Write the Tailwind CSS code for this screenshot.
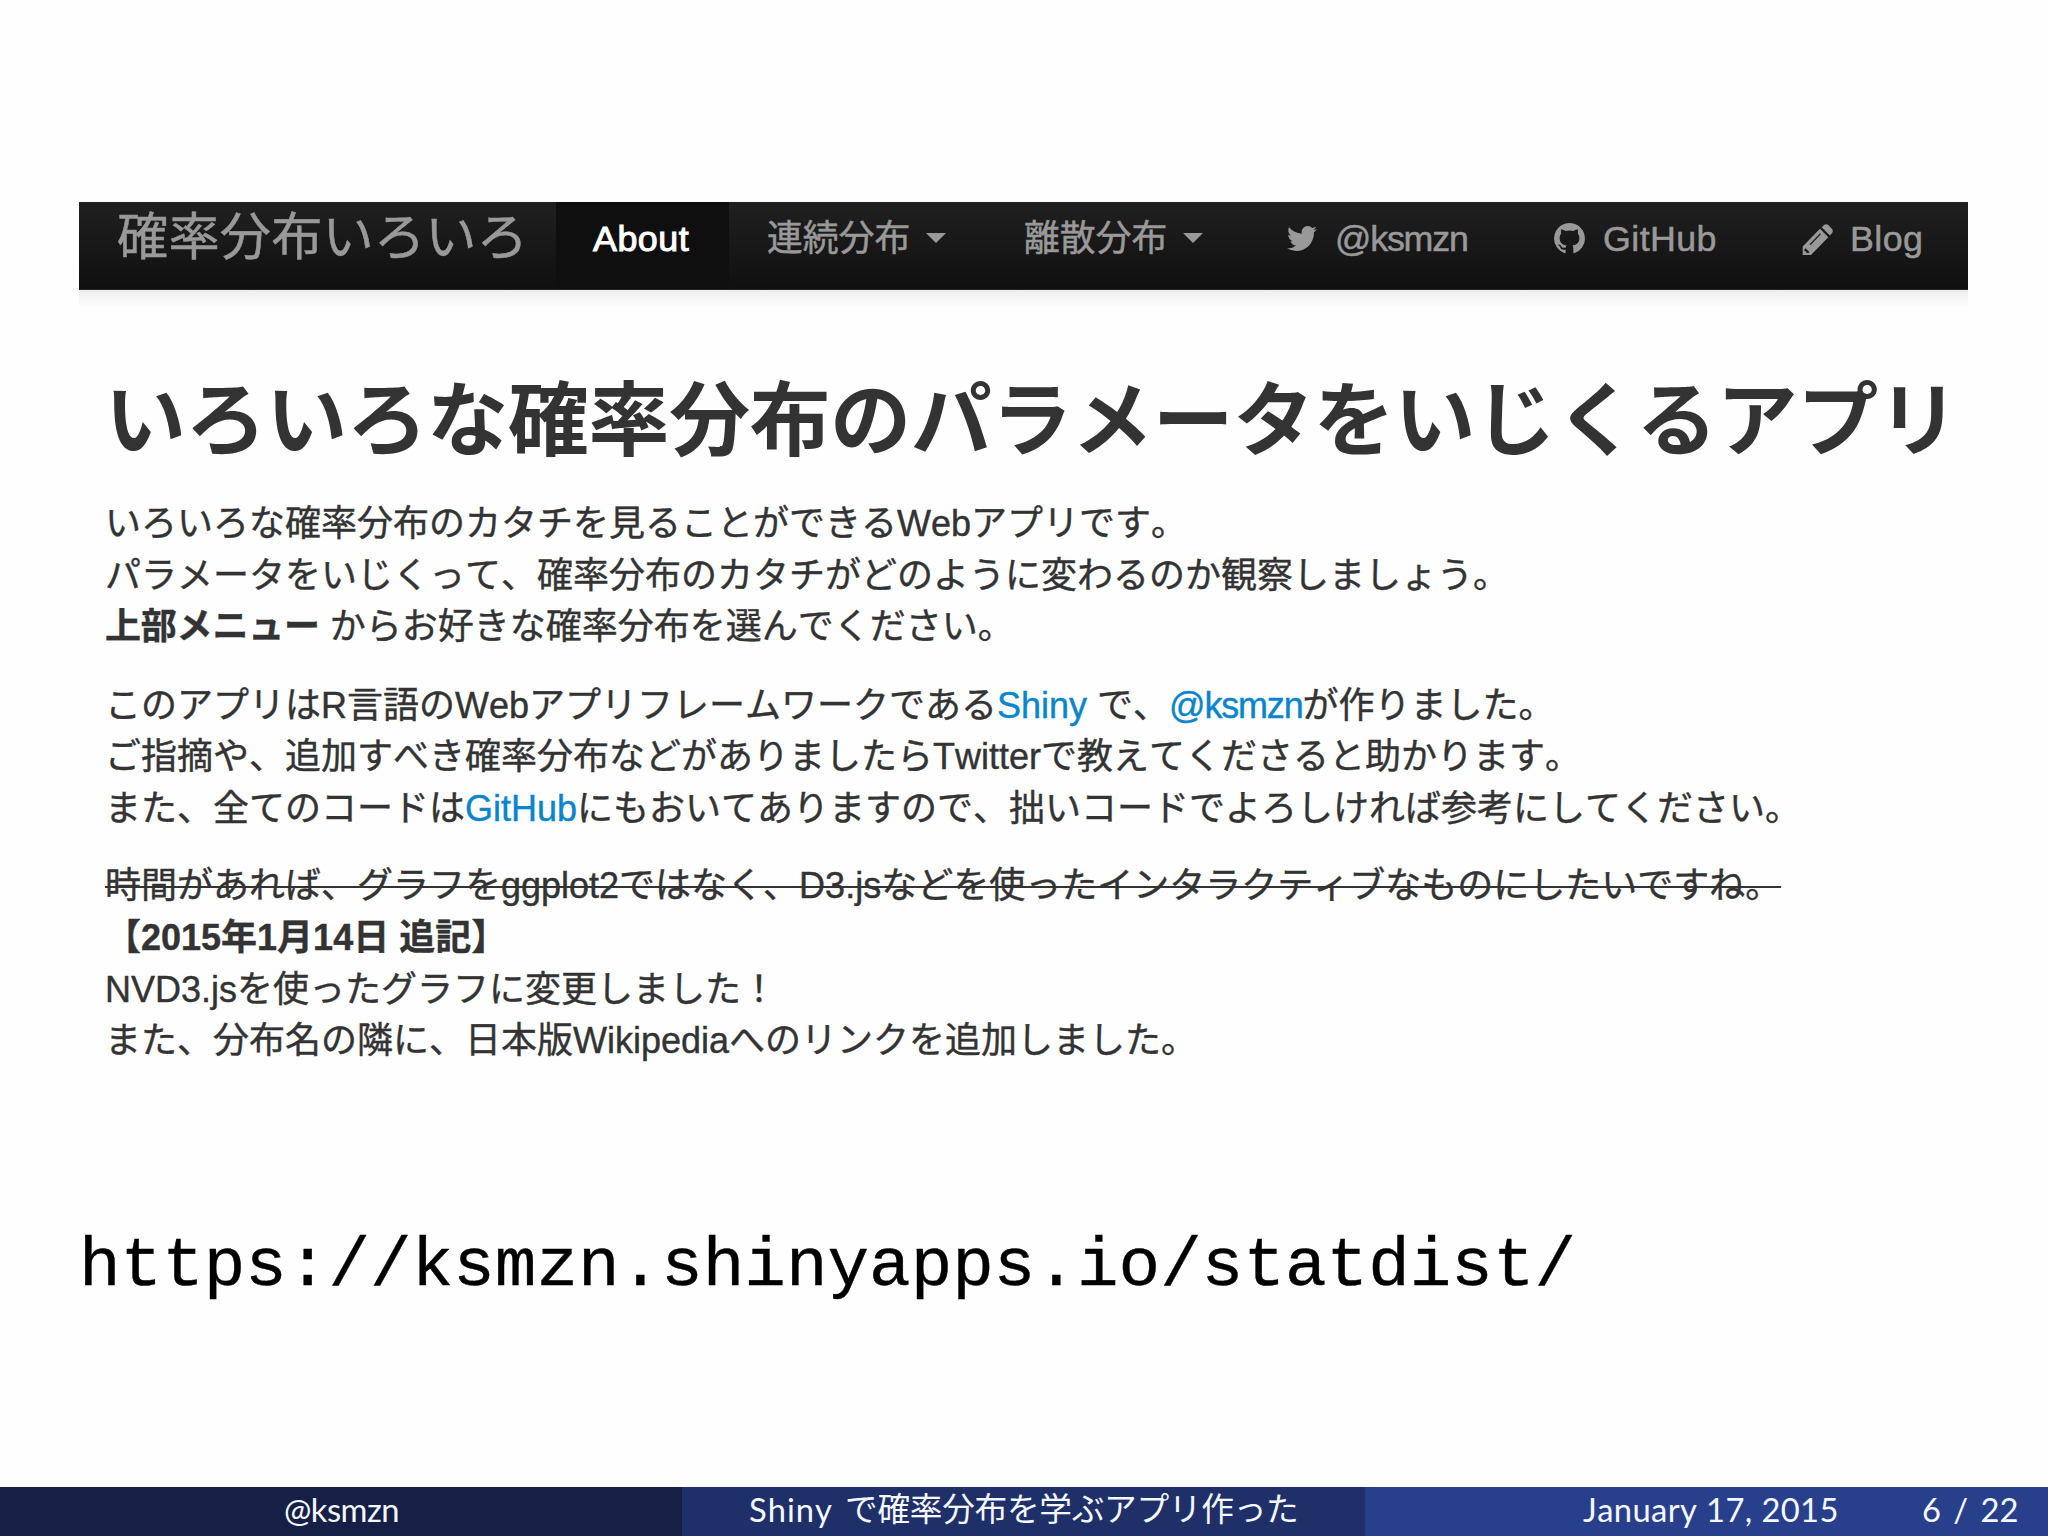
<!DOCTYPE html>
<html lang="ja">
<head>
<meta charset="utf-8">
<title>確率分布いろいろ</title>
<script src="https://cdn.jsdelivr.net/npm/@tailwindcss/browser@4"></script>
</head>
<body class="bg-[#fefefe]">
<div class="flex h-[1536px] w-[2048px] flex-col overflow-hidden font-['Liberation_Sans','Noto_Sans_CJK_JP',sans-serif] text-[35.85px] text-[#333] [font-kerning:none]">
  <nav class="mt-[202px] ml-[79px] flex h-[88px] w-[1889px] shrink-0 whitespace-nowrap border-b border-[#252525] bg-linear-to-b from-[#202020] to-[#111011] leading-[74px] text-[#999] [-webkit-text-stroke:0.5px]">
    <div class="w-[477px] pl-[38px] text-[51.2px] leading-[72px] tracking-[0.2px]">確率分布いろいろ</div>
    <div class="w-[173px] bg-[#0f0f10] pl-[37px] text-white [-webkit-text-stroke:1px_white] tracking-[0.5px]">About</div>
    <div class="flex w-[256px] pl-[38px]">連続分布<span class="mt-[31px] ml-[16px] h-0 w-0 border-x-[10px] border-t-[10px] border-x-transparent border-t-[#999]"></span></div>
    <div class="flex w-[265px] pl-[39px]">離散分布<span class="mt-[31px] ml-[16px] h-0 w-0 border-x-[10px] border-t-[10px] border-x-transparent border-t-[#999]"></span></div>
    <div class="flex w-[266px] pl-[37px] tracking-[-1.2px]">
      <svg class="mt-[24px] mr-[18px] h-[25px] w-[30px]" viewBox="108 256 1576 1280" preserveAspectRatio="none" fill="#999"><path d="M1684 408q-67 98-162 167 1 14 1 42 0 130-38 259.500t-115.500 248.500-184.500 210.500-258 146-323 54.500q-271 0-496-145 35 4 78 4 225 0 401-138-105-2-188-64.500t-114-159.500q33 5 61 5 43 0 85-11-112-23-185.500-111.500t-73.500-205.500v-4q68 38 146 41-66-44-105-115t-39-154q0-88 44-163 121 149 294.500 238.500t371.500 99.500q-8-38-8-74 0-134 94.500-228.500t228.500-94.500q140 0 236 102 109-21 205-78-37 115-142 178 93-10 186-50z"/></svg>@ksmzn</div>
    <div class="flex w-[248px] pl-[38px] tracking-[0.4px]">
      <svg class="mt-[21px] mr-[18px] h-[31px] w-[31px]" viewBox="128 128 1536 1536" fill="#999"><path d="M896 128q209 0 385.500 103t279.500 279.500 103 385.500q0 251-146.500 451.500t-378.500 277.500q-27 5-40-7t-13-30q0-3 .5-76.500t.5-134.500q0-97-52-142 57-6 102.500-18t94-39 81-66.500 53-105 20.500-150.500q0-119-79-206 37-91-8-204-28-9-81 11t-92 44l-38 24q-93-26-192-26t-192 26q-16-11-42.500-27t-83.500-38.500-85-13.500q-45 113-8 204-79 87-79 206 0 85 20.500 150t52.500 105 80.500 67 94 39 102.500 18q-39 36-49 103-21 10-45 15t-57 5-65.500-21.500-55.500-62.500q-19-32-48.500-52t-49.500-24l-20-3q-21 0-29 4.500t-5 11.500 9 14 13 12l7 5q22 10 43.500 38t31.500 51l10 23q13 38 44 61.500t67 30 69.500 7 55.500-3.500l23-4q0 38 .5 88.500t.5 54.500q0 18-13 30t-40 7q-232-77-378.500-277.500t-146.500-451.500q0-209 103-385.500t279.500-279.500 385.500-103z"/></svg>GitHub</div>
    <div class="flex pl-[38px] tracking-[0.4px]">
      <svg class="mt-[22px] mr-[17px] h-[31px] w-[31px]" viewBox="0 0 31 31"><path fill="#999" d="M.7 31V22.500L18 4.700 26.300 13.300 9 31ZM19.700 3.200L22 .9Q24 -.6 26.300 1L30 4.900Q31.600 7 30 9.200L27.900 11.600Z"/><path d="M8 20.700L18.500 9.800" stroke="#222" stroke-width="1.300"/><path fill="#161616" d="M3.500 24.200L7.600 28.300 6 29H4.300V27.300H2.500V25.300Z"/></svg>Blog</div>
  </nav>
  <div class="ml-[79px] h-[18px] w-[1889px] shrink-0 bg-linear-to-b from-[#efedf0] to-[#fefefe]"></div>

  <main class="ml-[105px] h-[892px] shrink-0 whitespace-nowrap text-[36px] leading-[51.7px] [-webkit-text-stroke:0.4px]">
    <h1 class="mt-[61px] text-[80.9px] leading-[104px] font-bold tracking-[-0.3px] [-webkit-text-stroke:0]">いろいろな確率分布のパラメータをいじくるアプリ</h1>
    <p class="mt-[25px]">いろいろな確率分布のカタチを見ることができるWebアプリです。<br>パラメータをいじくって、確率分布のカタチがどのように変わるのか観察しましょう。<br><b class="tracking-[-0.2px]">上部メニュー</b> からお好きな確率分布を選んでください。</p>
    <p class="mt-[26.500px]">このアプリはR言語のWebアプリフレームワークである<a class="text-[#0a84cb]">Shiny</a> で、<a class="text-[#0a84cb] tracking-[-1.2px]">@ksmzn</a>が作りました。<br>ご指摘や、追加すべき確率分布などがありましたらTwitterで教えてくださると助かります。<br>また、全てのコードは<a class="text-[#0a84cb]">GitHub</a>にもおいてありますので、拙いコードでよろしければ参考にしてください。</p>
    <p class="mt-[25.500px]"><s class="decoration-2">時間があれば、グラフをggplot2ではなく、D3.jsなどを使ったインタラクティブなものにしたいですね。</s><br><b>【2015年1月14日 追記】</b><br>NVD3.jsを使ったグラフに変更しました！<br>また、分布名の隣に、日本版Wikipediaへのリンクを追加しました。</p>
  </main>

  <div class="ml-[79px] h-[287px] shrink-0 whitespace-nowrap font-['Liberation_Mono',monospace] text-[69.3px] leading-[133px] text-black [-webkit-text-stroke:0.4px]">https://ksmzn.shinyapps.io/statdist/</div>

  <footer class="flex h-[49px] shrink-0 whitespace-nowrap font-['Lato','Noto_Sans_CJK_JP',sans-serif] text-[32.7px] leading-[45px] text-[#f4f8ff]">
    <div class="w-[682px] bg-[#162046] pl-[284px] tracking-[-0.5px]">@ksmzn</div>
    <div class="flex w-[683px] bg-[#1f2f68] pl-[67px]"><span class="w-[96px] tracking-[1px]">Shiny</span><span class="leading-[43px] tracking-[-0.3px]">で確率分布を学ぶアプリ作った</span></div>
    <div class="flex w-[683px] bg-[#283f8c] pl-[218px]"><span class="w-[339px] tracking-[0.4px]">January 17, 2015</span><span class="[word-spacing:4px]">6 / 22</span></div>
  </footer>
</div>
</body>
</html>
